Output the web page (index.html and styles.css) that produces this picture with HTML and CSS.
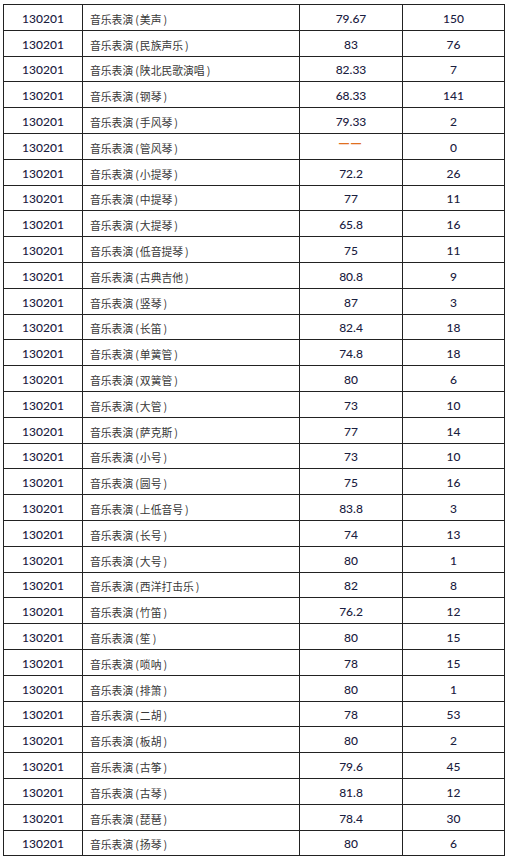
FILE: index.html
```html
<!DOCTYPE html>
<html lang="zh">
<head>
<meta charset="utf-8">
<link rel="stylesheet" href="styles.css">
</head>
<body>
<table class="grid">
<colgroup><col class="c1"><col class="c2"><col class="c3"><col class="c4"></colgroup>
<tbody>
<tr><td class="code">130201</td><td class="name">音乐表演<span class="p">(</span>美声<span class="p">)</span></td><td class="num">79.67</td><td class="num">150</td></tr>
<tr><td class="code">130201</td><td class="name">音乐表演<span class="p">(</span>民族声乐<span class="p">)</span></td><td class="num">83</td><td class="num">76</td></tr>
<tr><td class="code">130201</td><td class="name">音乐表演<span class="p">(</span>陕北民歌演唱<span class="p">)</span></td><td class="num">82.33</td><td class="num">7</td></tr>
<tr><td class="code">130201</td><td class="name">音乐表演<span class="p">(</span>钢琴<span class="p">)</span></td><td class="num">68.33</td><td class="num">141</td></tr>
<tr><td class="code">130201</td><td class="name">音乐表演<span class="p">(</span>手风琴<span class="p">)</span></td><td class="num">79.33</td><td class="num">2</td></tr>
<tr><td class="code">130201</td><td class="name">音乐表演<span class="p">(</span>管风琴<span class="p">)</span></td><td class="num"><span class="dash">——</span></td><td class="num">0</td></tr>
<tr><td class="code">130201</td><td class="name">音乐表演<span class="p">(</span>小提琴<span class="p">)</span></td><td class="num">72.2</td><td class="num">26</td></tr>
<tr><td class="code">130201</td><td class="name">音乐表演<span class="p">(</span>中提琴<span class="p">)</span></td><td class="num">77</td><td class="num">11</td></tr>
<tr><td class="code">130201</td><td class="name">音乐表演<span class="p">(</span>大提琴<span class="p">)</span></td><td class="num">65.8</td><td class="num">16</td></tr>
<tr><td class="code">130201</td><td class="name">音乐表演<span class="p">(</span>低音提琴<span class="p">)</span></td><td class="num">75</td><td class="num">11</td></tr>
<tr><td class="code">130201</td><td class="name">音乐表演<span class="p">(</span>古典吉他<span class="p">)</span></td><td class="num">80.8</td><td class="num">9</td></tr>
<tr><td class="code">130201</td><td class="name">音乐表演<span class="p">(</span>竖琴<span class="p">)</span></td><td class="num">87</td><td class="num">3</td></tr>
<tr><td class="code">130201</td><td class="name">音乐表演<span class="p">(</span>长笛<span class="p">)</span></td><td class="num">82.4</td><td class="num">18</td></tr>
<tr><td class="code">130201</td><td class="name">音乐表演<span class="p">(</span>单簧管<span class="p">)</span></td><td class="num">74.8</td><td class="num">18</td></tr>
<tr><td class="code">130201</td><td class="name">音乐表演<span class="p">(</span>双簧管<span class="p">)</span></td><td class="num">80</td><td class="num">6</td></tr>
<tr><td class="code">130201</td><td class="name">音乐表演<span class="p">(</span>大管<span class="p">)</span></td><td class="num">73</td><td class="num">10</td></tr>
<tr><td class="code">130201</td><td class="name">音乐表演<span class="p">(</span>萨克斯<span class="p">)</span></td><td class="num">77</td><td class="num">14</td></tr>
<tr><td class="code">130201</td><td class="name">音乐表演<span class="p">(</span>小号<span class="p">)</span></td><td class="num">73</td><td class="num">10</td></tr>
<tr><td class="code">130201</td><td class="name">音乐表演<span class="p">(</span>圆号<span class="p">)</span></td><td class="num">75</td><td class="num">16</td></tr>
<tr><td class="code">130201</td><td class="name">音乐表演<span class="p">(</span>上低音号<span class="p">)</span></td><td class="num">83.8</td><td class="num">3</td></tr>
<tr><td class="code">130201</td><td class="name">音乐表演<span class="p">(</span>长号<span class="p">)</span></td><td class="num">74</td><td class="num">13</td></tr>
<tr><td class="code">130201</td><td class="name">音乐表演<span class="p">(</span>大号<span class="p">)</span></td><td class="num">80</td><td class="num">1</td></tr>
<tr><td class="code">130201</td><td class="name">音乐表演<span class="p">(</span>西洋打击乐<span class="p">)</span></td><td class="num">82</td><td class="num">8</td></tr>
<tr><td class="code">130201</td><td class="name">音乐表演<span class="p">(</span>竹笛<span class="p">)</span></td><td class="num">76.2</td><td class="num">12</td></tr>
<tr><td class="code">130201</td><td class="name">音乐表演<span class="p">(</span>笙<span class="p">)</span></td><td class="num">80</td><td class="num">15</td></tr>
<tr><td class="code">130201</td><td class="name">音乐表演<span class="p">(</span>唢呐<span class="p">)</span></td><td class="num">78</td><td class="num">15</td></tr>
<tr><td class="code">130201</td><td class="name">音乐表演<span class="p">(</span>排箫<span class="p">)</span></td><td class="num">80</td><td class="num">1</td></tr>
<tr><td class="code">130201</td><td class="name">音乐表演<span class="p">(</span>二胡<span class="p">)</span></td><td class="num">78</td><td class="num">53</td></tr>
<tr><td class="code">130201</td><td class="name">音乐表演<span class="p">(</span>板胡<span class="p">)</span></td><td class="num">80</td><td class="num">2</td></tr>
<tr><td class="code">130201</td><td class="name">音乐表演<span class="p">(</span>古筝<span class="p">)</span></td><td class="num">79.6</td><td class="num">45</td></tr>
<tr><td class="code">130201</td><td class="name">音乐表演<span class="p">(</span>古琴<span class="p">)</span></td><td class="num">81.8</td><td class="num">12</td></tr>
<tr><td class="code">130201</td><td class="name">音乐表演<span class="p">(</span>琵琶<span class="p">)</span></td><td class="num">78.4</td><td class="num">30</td></tr>
<tr><td class="code">130201</td><td class="name">音乐表演<span class="p">(</span>扬琴<span class="p">)</span></td><td class="num">80</td><td class="num">6</td></tr>
</tbody>
</table>
</body>
</html>
```
FILE: styles.css
```css
html, body {
  margin: 0;
  padding: 0;
  background: #fff;
}
body {
  padding: 4px 0 0 3px;
}
.grid {
  border-collapse: collapse;
  table-layout: fixed;
  width: 501px;
  border: 1px solid #111;
}
.c1 { width: 79px; }
.c2 { width: 217px; }
.c3 { width: 103px; }
.c4 { width: 102px; }
.grid td {
  border: 1px solid #222;
  height: 25.8px;
  padding: 3px 0 0 0;
  line-height: 14px;
  vertical-align: middle;
  box-sizing: border-box;
}
.code, .num {
  font-family: Lato, "Liberation Sans", sans-serif;
  font-size: 12px;
  font-weight: 500;
  color: #1a2040;
  text-align: center;
}
.name {
  font-family: "Noto Sans CJK SC", sans-serif;
  font-size: 10.8px;
  color: #383838;
  padding-left: 7px !important;
}
.p {
  margin: 0 1px 0 2px;
}
.dash {
  display: inline-block;
  color: #e07020;
  font-family: "Liberation Sans", sans-serif;
  font-size: 10px;
  font-weight: bold;
  letter-spacing: 2px;
  transform: translateY(-4px);
}
```
